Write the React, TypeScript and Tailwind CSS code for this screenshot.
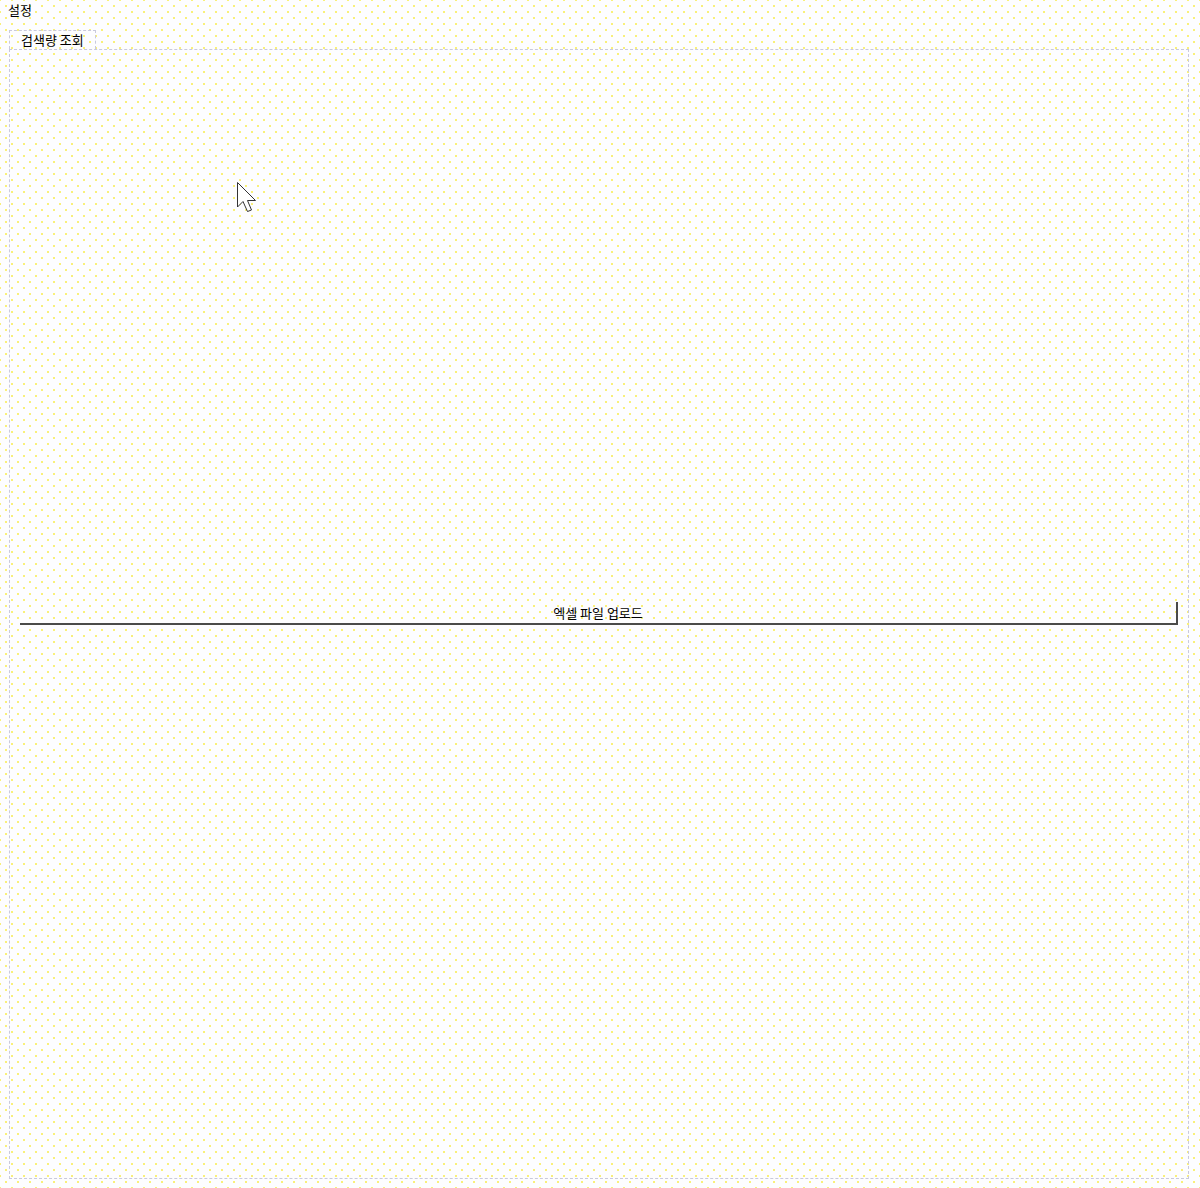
export default function App() {
  return (
    <div
      className="relative w-[1200px] h-[1188px] bg-[#fdfdff] bg-[radial-gradient(circle,#f9f07a_0.8px,transparent_1.1px),radial-gradient(circle,#f9f07a_0.8px,transparent_1.1px)] bg-[length:12px_12px,12px_12px] bg-[position:0_0,6px_6px] text-[13px] text-black overflow-hidden"
      style={{ fontFamily: '"Noto Sans CJK KR", "Noto Sans", sans-serif' }}
    >
      {/* Title */}
      <div className="pl-[8px] pt-[2px] h-[30px] leading-[16px]">설정</div>

      {/* Tabs */}
      <div className="pl-[9px] pr-[11px]">
        <div className="flex">
          <div className="h-[19px] px-[11px] border border-b-0 border-dashed border-[#c9c9dc] leading-[18px]">
            검색량 조회
          </div>
        </div>

        {/* Panel */}
        <div className="h-[1130px] border border-dashed border-[#c9c9dc] pt-[552px] pl-[10px] pr-[10px]">
          <button className="w-full h-[23px] border-r-2 border-b-2 border-[#4a4a4a] bg-transparent leading-[18px] text-[13px]">
            엑셀 파일 업로드
          </button>
        </div>
      </div>

      {/* Mouse cursor */}
      <svg
        className="absolute left-[236px] top-[181px]"
        width="24"
        height="34"
        viewBox="0 0 24 34"
      >
        <path
          d="M1.5 1.5 L1.5 26 L7 20.5 L11.5 30.5 L15.5 29 L11.5 19.5 L19.5 19.5 Z"
          fill="#fff"
          stroke="#333"
          strokeWidth="1"
          strokeLinejoin="miter"
        />
      </svg>
    </div>
  );
}
